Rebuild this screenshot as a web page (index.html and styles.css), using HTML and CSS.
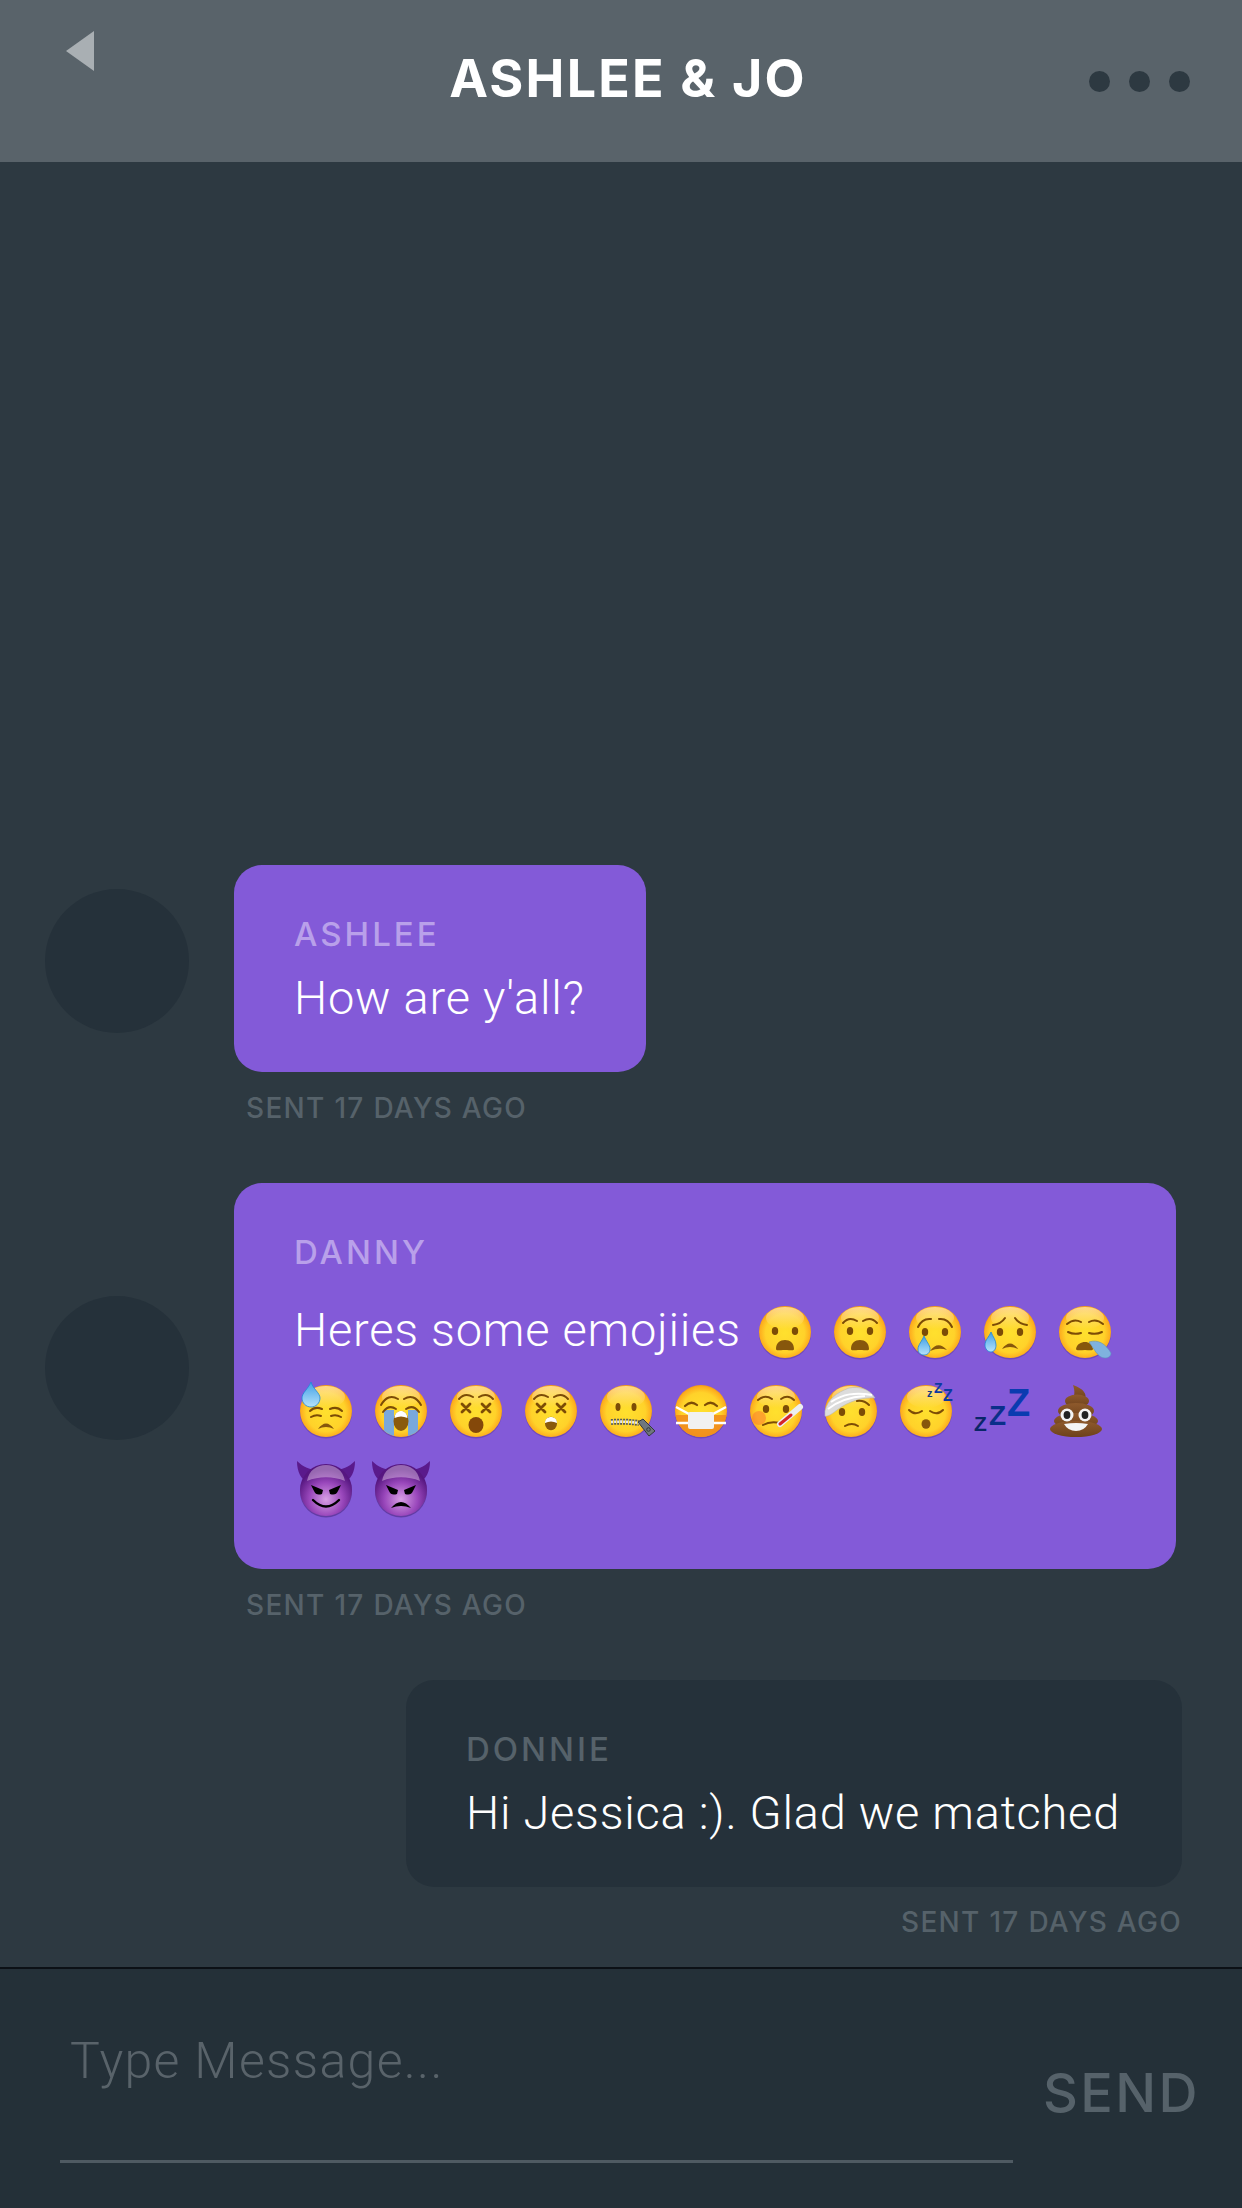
FILE: index.html
```html
<!DOCTYPE html>
<html lang="en">
<head>
    <meta charset="UTF-8">
    <meta name="viewport" content="width=device-width, initial-scale=1.0">
    <title>Ashlee &amp; Jo</title>
    <link rel="stylesheet" href="styles.css">
</head>
<body>
    <!-- emoji drawings, reused below with <use> -->
    <svg class="emoji-defs" aria-hidden="true">
        <defs>
            <radialGradient id="faceFill" cx="50%" cy="52%" r="52%">
                <stop offset="0" stop-color="#ffe02e"/>
                <stop offset="0.72" stop-color="#ffd22a"/>
                <stop offset="0.93" stop-color="#fdae1e"/>
                <stop offset="1" stop-color="#f59a12"/>
            </radialGradient>
            <linearGradient id="faceGloss" x1="0" y1="0" x2="0" y2="1">
                <stop offset="0" stop-color="#ffe9b0" stop-opacity="0.75"/>
                <stop offset="1" stop-color="#ffe9b0" stop-opacity="0"/>
            </linearGradient>
            <radialGradient id="devilFill" cx="50%" cy="68%" r="58%">
                <stop offset="0" stop-color="#d79fe4"/>
                <stop offset="0.55" stop-color="#9a48bc"/>
                <stop offset="1" stop-color="#561680"/>
            </radialGradient>
            <linearGradient id="dropFill" x1="0" y1="0" x2="0" y2="1">
                <stop offset="0" stop-color="#3f9fe6"/>
                <stop offset="1" stop-color="#b5e2fa"/>
            </linearGradient>
            <linearGradient id="poopFill" x1="0" y1="0" x2="0" y2="1">
                <stop offset="0" stop-color="#8f5a2c"/>
                <stop offset="1" stop-color="#6d411c"/>
            </linearGradient>
            <clipPath id="faceClip"><circle cx="26" cy="26" r="26"/></clipPath>

            <g id="face">
                <circle cx="26" cy="27.5" r="26" fill="#4b2a86" opacity="0.35"/>
                <circle cx="26" cy="26" r="26" fill="url(#faceFill)"/>
                <ellipse cx="26" cy="12" rx="19" ry="11" fill="url(#faceGloss)"/>
            </g>
            <g id="eyes" fill="#7c4c06">
                <ellipse cx="16" cy="25" rx="3.2" ry="4"/>
                <ellipse cx="36" cy="25" rx="3.2" ry="4"/>
            </g>
            <path id="openFrown" fill="#87570c" d="M17 43C17 37 21 34 26 34C31 34 35 37 35 43C35 45 32 44 26 44C20 44 17 45 17 43Z"/>
            <g id="archBrows" fill="none" stroke="#7c4c06" stroke-width="2" stroke-linecap="round">
                <path d="M9 17Q15 10 23 15"/>
                <path d="M29 15Q37 10 43 17"/>
            </g>
            <g id="xEyes" fill="none" stroke="#7c4c06" stroke-width="2.8" stroke-linecap="round">
                <path d="M12 19L20 27M20 19L12 27M32 19L40 27M40 19L32 27"/>
            </g>

            <g id="anguished"><use href="#face"/><use href="#eyes"/><use href="#openFrown"/></g>
            <g id="fearful"><use href="#face"/><use href="#eyes"/><use href="#archBrows"/><use href="#openFrown"/></g>
            <g id="crying">
                <use href="#face"/><use href="#eyes" y="1"/>
                <g fill="none" stroke="#7c4c06" stroke-width="2" stroke-linecap="round">
                    <path d="M9 21Q13 12 22 13"/>
                    <path d="M30 13Q39 12 43 21"/>
                </g>
                <path fill="#87570c" d="M21 45Q29 34 38 44Q30 41 21 45Z"/>
                <path fill="url(#dropFill)" stroke="#1e87d8" stroke-width="0.8" d="M15 30C17 35 21 39 21 43C21 47 18 49 15 49C12 49 9 47 9 43C9 39 13 35 15 30Z"/>
            </g>
            <g id="sadSweat">
                <use href="#face"/><use href="#eyes" y="1"/>
                <g fill="none" stroke="#7c4c06" stroke-width="2" stroke-linecap="round">
                    <path d="M9 19Q17 18 21 12"/>
                    <path d="M31 12Q35 18 43 19"/>
                </g>
                <path fill="#87570c" d="M18 43Q26 32 34 43Q26 39 18 43Z"/>
                <path fill="url(#dropFill)" stroke="#1e87d8" stroke-width="0.8" d="M7 26C9 31 12 34 12 39C12 43 10 46 7 46C4 46 1 43 1 39C1 34 5 31 7 26Z"/>
            </g>
            <g id="sleepy">
                <use href="#face"/>
                <g fill="none" stroke="#7c4c06" stroke-width="2" stroke-linecap="round">
                    <path d="M8 18Q15 12 22 16"/>
                    <path d="M30 16Q37 12 44 18"/>
                    <path d="M9 26Q15 29 22 27"/>
                    <path d="M30 27Q37 29 43 26"/>
                </g>
                <path fill="#87570c" d="M17 43C18 38 22 36 26 36C30 36 33 38 34 43C34 45 30 44 26 44C22 44 17 45 17 43Z"/>
                <path fill="#7fb2de" stroke="#5c8fbf" stroke-width="0.6" d="M30 36C39 33 47 38 52 47C52 52 46 53 42 51C37 48 34 41 30 36Z"/>
            </g>
            <g id="downcast">
                <use href="#face"/>
                <g fill="none" stroke="#7c4c06" stroke-width="2" stroke-linecap="round">
                    <path d="M10 26Q15 21 22 24"/>
                    <path d="M30 24Q37 21 42 26"/>
                    <path d="M11 32Q16 29 21 31"/>
                    <path d="M31 31Q36 29 41 32"/>
                </g>
                <path fill="#87570c" d="M18 44Q26 33 34 44Q26 40 18 44Z"/>
                <path fill="url(#dropFill)" stroke="#1e87d8" stroke-width="0.8" d="M11 -3C13 4 20 8 20 13C20 18 16 22 11 22C6 22 2 18 2 13C2 8 8 4 11 -3Z"/>
            </g>
            <g id="sobbing">
                <use href="#face"/>
                <g clip-path="url(#faceClip)" fill="#79a8dc">
                    <rect x="9" y="25" width="10" height="28"/>
                    <rect x="33" y="25" width="10" height="28"/>
                </g>
                <g fill="none" stroke="#7c4c06" stroke-width="2" stroke-linecap="round">
                    <path d="M6 20Q13 8 23 14"/>
                    <path d="M29 14Q39 8 46 20"/>
                    <path d="M8 27Q14 19 21 24"/>
                    <path d="M31 24Q38 19 44 27"/>
                </g>
                <ellipse cx="26" cy="36" rx="7.5" ry="10" fill="#8a5a0c"/>
                <path fill="#fff" d="M19.5 33C20 28 23 26 26 26C29 26 32 28 32.5 33C28 31 24 31 19.5 33Z"/>
            </g>
            <g id="dizzy">
                <use href="#face"/><use href="#xEyes"/><use href="#archBrows" y="-3"/>
                <ellipse cx="26" cy="40" rx="7.5" ry="8" fill="#84480a"/>
            </g>
            <g id="astonished">
                <use href="#face"/><use href="#xEyes"/><use href="#archBrows" y="-3"/>
                <ellipse cx="26" cy="38.5" rx="6" ry="6.8" fill="#8a5a0c"/>
                <path fill="#fff" d="M20 38C20 34 23 32 26 32C29 32 32 34 32 38C28 36 24 36 20 38Z"/>
            </g>
            <g id="zipper">
                <use href="#face"/>
                <g fill="#7c4c06">
                    <ellipse cx="18" cy="22" rx="2.5" ry="4"/>
                    <ellipse cx="34" cy="22" rx="2.5" ry="4"/>
                </g>
                <path fill="none" stroke="#55585c" stroke-width="6" stroke-dasharray="2 1" d="M11 37Q26 36 39 38"/>
                <path fill="none" stroke="#e8e8e8" stroke-width="2.6" stroke-dasharray="2 1" d="M11 37Q26 36 39 38"/>
                <path fill="#70777d" stroke="#33383c" stroke-width="1" d="M38 37L43 34L55 46L49 51Z"/>
                <circle cx="48.5" cy="44.5" r="1.8" fill="none" stroke="#33383c"/>
            </g>
            <g id="mask">
                <circle cx="26" cy="27.5" r="26" fill="#4b2a86" opacity="0.35"/>
                <circle cx="26" cy="26" r="26" fill="url(#faceFill)"/>
                <g clip-path="url(#faceClip)"><rect y="30" width="52" height="24" fill="#f08a1c" opacity="0.85"/></g>
                <g fill="none" stroke="#7c4c06" stroke-width="2.2" stroke-linecap="round">
                    <path d="M10 21Q16 15 22 20"/>
                    <path d="M30 20Q36 15 42 21"/>
                </g>
                <g fill="none" stroke="#fff" stroke-width="2.4">
                    <path d="M1 22L14 29M1 38L14 38M51 22L38 29M51 38L38 38"/>
                </g>
                <rect x="13" y="27" width="26" height="17" rx="2" fill="#f1f1f1"/>
            </g>
            <g id="thermometer">
                <use href="#face"/><use href="#eyes" y="-1"/>
                <circle cx="9" cy="33" r="7" fill="#fb7a30" opacity="0.55"/>
                <g fill="none" stroke="#7c4c06" stroke-width="2" stroke-linecap="round">
                    <path d="M8 15Q15 9 22 14"/>
                    <path d="M31 14Q38 9 44 15"/>
                    <path d="M13 40Q20 36 30 38"/>
                </g>
                <path stroke="#eceff1" stroke-width="6" stroke-linecap="round" d="M30 39L50 22"/>
                <path stroke="#d6242a" stroke-width="3" stroke-linecap="round" d="M30 39L41 30"/>
            </g>
            <g id="bandage">
                <use href="#face"/><use href="#eyes" x="1" y="2"/>
                <path fill="#dcdcdc" stroke="#b8b8b8" stroke-width="0.6" d="M0 26C3 14 11 8 24 3C34 1 45 4 50 13C38 12 24 16 12 25C7 29 2 32 0 31Z"/>
                <path fill="none" stroke="#fff" stroke-width="2" d="M6 17C18 9 30 7 47 10M3 24C13 16 24 12 40 11"/>
                <path fill="none" stroke="#7c4c06" stroke-width="2" stroke-linecap="round" d="M32 16Q39 15 44 20M20 41Q27 37 33 41"/>
            </g>
            <g id="sleeping">
                <use href="#face"/>
                <g fill="none" stroke="#7c4c06" stroke-width="2" stroke-linecap="round">
                    <path d="M9 25Q15 31 22 26"/>
                    <path d="M30 26Q37 31 43 25"/>
                </g>
                <ellipse cx="26" cy="39" rx="4.5" ry="4.8" fill="#87570c"/>
                <g class="zzz-text">
                    <text x="27" y="12" font-size="11" fill="#123a80">z</text>
                    <text x="34" y="8" font-size="14" fill="#0c3aa0">Z</text>
                    <text x="43" y="16" font-size="16" fill="#0c3aa0">Z</text>
                </g>
            </g>
            <g id="zzz" class="zzz-text">
                <text x="-1" y="46" font-size="21" fill="#0a2668">Z</text>
                <text x="14" y="40" font-size="28" fill="#0a2f8a">Z</text>
                <text x="32" y="31" font-size="38" fill="#0a3bb0">Z</text>
            </g>
            <g id="poop">
                <g fill="url(#poopFill)">
                    <path d="M23 0C34 4 37 9 35 14L22 15C25 11 25 6 23 0Z"/>
                    <ellipse cx="27" cy="16" rx="12" ry="6.5"/>
                    <ellipse cx="26" cy="26" rx="18" ry="8"/>
                    <ellipse cx="26" cy="36" rx="22" ry="8"/>
                    <ellipse cx="26" cy="44" rx="26" ry="8"/>
                </g>
                <circle cx="17" cy="30" r="6.5" fill="#f4f4f4"/>
                <circle cx="35" cy="30" r="6.5" fill="#f4f4f4"/>
                <ellipse cx="17" cy="30" rx="3.4" ry="4" fill="#222"/>
                <ellipse cx="35" cy="30" rx="3.4" ry="4" fill="#222"/>
                <path fill="#f4f4f4" d="M14 39Q26 37 38 39Q34 46 26 46Q18 46 14 39Z"/>
            </g>
            <g id="devilBase">
                <path fill="#5a1a8c" d="M-3-3C-3 8 1 15 8 19L19 6C10 6 3 3-3-3Z"/>
                <path fill="#5a1a8c" d="M55-3C55 8 51 15 44 19L33 6C42 6 49 3 55-3Z"/>
                <circle cx="26" cy="27.5" r="26" fill="#31105a" opacity="0.4"/>
                <circle cx="26" cy="26" r="26" fill="url(#devilFill)"/>
                <path fill="#e6cdee" opacity="0.45" d="M7 17C9 6 17 1 26 1C35 1 43 6 45 17C33 12 19 12 7 17Z"/>
            </g>
            <g id="smilingDevil">
                <use href="#devilBase"/>
                <path d="M11 21L23 26L22 30Q16 32 14 27ZM41 21L29 26L30 30Q36 32 38 27Z"/>
                <path fill="none" stroke="#000" stroke-width="2.4" stroke-linecap="round" d="M13 36Q26 49 39 36"/>
            </g>
            <g id="angryDevil">
                <use href="#devilBase"/>
                <path d="M11 21L23 26L22 30Q16 32 14 27ZM41 21L29 26L30 30Q36 32 38 27Z"/>
                <path d="M16 44Q26 32 36 44Q26 40 16 44Z"/>
            </g>
        </defs>
    </svg>

    <header class="top-bar">
        <svg class="back-arrow" viewBox="0 0 28 40"><path d="M28 0V40L0 20Z"/></svg>
        <h1 class="chat-title">ASHLEE &amp; JO</h1>
        <div class="menu-dots"><span></span><span></span><span></span></div>
    </header>

    <main class="messages">
        <div class="message">
            <div class="msg-row">
                <div class="avatar"></div>
                <div class="bubble">
                    <div class="sender">ASHLEE</div>
                    <p class="msg-text">How are y'all?</p>
                </div>
            </div>
            <div class="sent-time">SENT 17 DAYS AGO</div>
        </div>

        <div class="message">
            <div class="msg-row">
                <div class="avatar"></div>
                <div class="bubble bubble-wide">
                    <div class="sender sender-emoji">DANNY</div>
                    <p class="msg-text msg-emoji">Heres some emojiies
                        <svg class="emoji" viewBox="0 0 52 52"><use href="#anguished"/></svg><svg class="emoji" viewBox="0 0 52 52"><use href="#fearful"/></svg><svg class="emoji" viewBox="0 0 52 52"><use href="#crying"/></svg><svg class="emoji" viewBox="0 0 52 52"><use href="#sadSweat"/></svg><svg class="emoji" viewBox="0 0 52 52"><use href="#sleepy"/></svg><svg class="emoji" viewBox="0 0 52 52"><use href="#downcast"/></svg><svg class="emoji" viewBox="0 0 52 52"><use href="#sobbing"/></svg><svg class="emoji" viewBox="0 0 52 52"><use href="#dizzy"/></svg><svg class="emoji" viewBox="0 0 52 52"><use href="#astonished"/></svg><svg class="emoji" viewBox="0 0 52 52"><use href="#zipper"/></svg><svg class="emoji" viewBox="0 0 52 52"><use href="#mask"/></svg><svg class="emoji" viewBox="0 0 52 52"><use href="#thermometer"/></svg><svg class="emoji" viewBox="0 0 52 52"><use href="#bandage"/></svg><svg class="emoji" viewBox="0 0 52 52"><use href="#sleeping"/></svg><svg class="emoji" viewBox="0 0 52 52"><use href="#zzz"/></svg><svg class="emoji" viewBox="0 0 52 52"><use href="#poop"/></svg><svg class="emoji" viewBox="0 0 52 52"><use href="#smilingDevil"/></svg><svg class="emoji" viewBox="0 0 52 52"><use href="#angryDevil"/></svg>
                    </p>
                </div>
            </div>
            <div class="sent-time">SENT 17 DAYS AGO</div>
        </div>

        <div class="message message-own">
            <div class="bubble bubble-own">
                <div class="sender sender-own">DONNIE</div>
                <p class="msg-text">Hi Jessica :). Glad we matched</p>
            </div>
            <div class="sent-time sent-own">SENT 17 DAYS AGO</div>
        </div>
    </main>

    <footer class="composer">
        <div class="composer-input">Type Message...</div>
        <div class="send-btn">SEND</div>
    </footer>
</body>
</html>
```

FILE: styles.css
```css
* {
    box-sizing: border-box;
}

html, body {
    margin: 0;
    height: 100%;
}

body {
    background-color: #2d3941;
    color: #ffffff;
    font-family: Inter, "Liberation Sans", sans-serif;
    display: flex;
    flex-direction: column;
    height: 2208px;
    overflow: hidden;
}

.emoji-defs {
    position: absolute;
    width: 0;
    height: 0;
}

.top-bar {
    height: 162px;
    flex: none;
    background-color: #59636a;
    display: grid;
    grid-template-columns: 1fr auto 1fr;
    align-items: start;
    padding: 31px 52px 0 66px;
}

.back-arrow {
    width: 28px;
    height: 40px;
    fill: #a9afb3;
}

.chat-title {
    margin: 18px 0 0;
    font-size: 52px;
    line-height: 60px;
    font-weight: 700;
    letter-spacing: 2.2px;
    color: #ffffff;
}

.menu-dots {
    display: flex;
    justify-self: end;
    gap: 19px;
    margin-top: 40px;
}

.menu-dots span {
    width: 21px;
    height: 21px;
    border-radius: 50%;
    background-color: #2d3941;
}

.messages {
    flex: 1;
    display: flex;
    flex-direction: column;
    justify-content: flex-end;
    padding-bottom: 25px;
}

.message {
    margin-top: 55px;
    padding-left: 45px;
}

.message-own {
    display: flex;
    flex-direction: column;
    align-items: flex-end;
    padding: 0 60px 0 0;
}

.msg-row {
    display: flex;
    align-items: center;
    gap: 45px;
}

.avatar {
    width: 144px;
    height: 144px;
    flex: none;
    border-radius: 50%;
    background-color: #25313a;
    margin-bottom: 16px;
}

.bubble {
    background-color: #835ad8;
    border-radius: 28px;
    padding: 49px 61px 44px 60px;
}

.bubble-wide {
    width: 942px;
    padding: 49px 46px 42px 60px;
}

.bubble-own {
    background-color: #25313a;
    padding: 49px 62px 44px 60px;
}

.sender {
    font-size: 33px;
    line-height: 40px;
    font-weight: 500;
    letter-spacing: 3px;
    color: #b9a0ea;
    margin-bottom: 14px;
}

.sender-emoji {
    margin-bottom: 18px;
}

.sender-own {
    color: #56626a;
}

.msg-text {
    margin: 0;
    font-family: Roboto, Inter, sans-serif;
    font-size: 47px;
    line-height: 60px;
    font-weight: 300;
    letter-spacing: 0.75px;
    white-space: nowrap;
}

.msg-emoji {
    line-height: 79px;
    white-space: normal;
}

.emoji {
    width: 52px;
    height: 52px;
    margin: 0 17px 0 6px;
    vertical-align: -12px;
    overflow: visible;
}

.zzz-text {
    font-family: "Liberation Sans", sans-serif;
    font-weight: 700;
}

.sent-time {
    font-size: 28px;
    line-height: 40px;
    font-weight: 500;
    letter-spacing: 1.3px;
    color: #56626a;
    margin: 16px 0 0 201px;
}

.sent-own {
    margin: 15px 0 0;
}

.composer {
    height: 241px;
    flex: none;
    background-color: #243038;
    border-top: 2px solid #0c1116;
    display: flex;
    align-items: flex-start;
    padding: 0 0 0 60px;
}

.composer-input {
    width: 953px;
    height: 194px;
    flex: none;
    border-bottom: 3px solid #4f5a62;
    padding: 62px 0 0 10px;
    font-family: Roboto, Inter, sans-serif;
    font-size: 50px;
    line-height: 60px;
    font-weight: 300;
    letter-spacing: 1.33px;
    color: #59636a;
}

.send-btn {
    margin: 94px 0 0 30px;
    font-size: 54px;
    line-height: 60px;
    font-weight: 500;
    letter-spacing: 2.4px;
    color: #56626a;
}
```
